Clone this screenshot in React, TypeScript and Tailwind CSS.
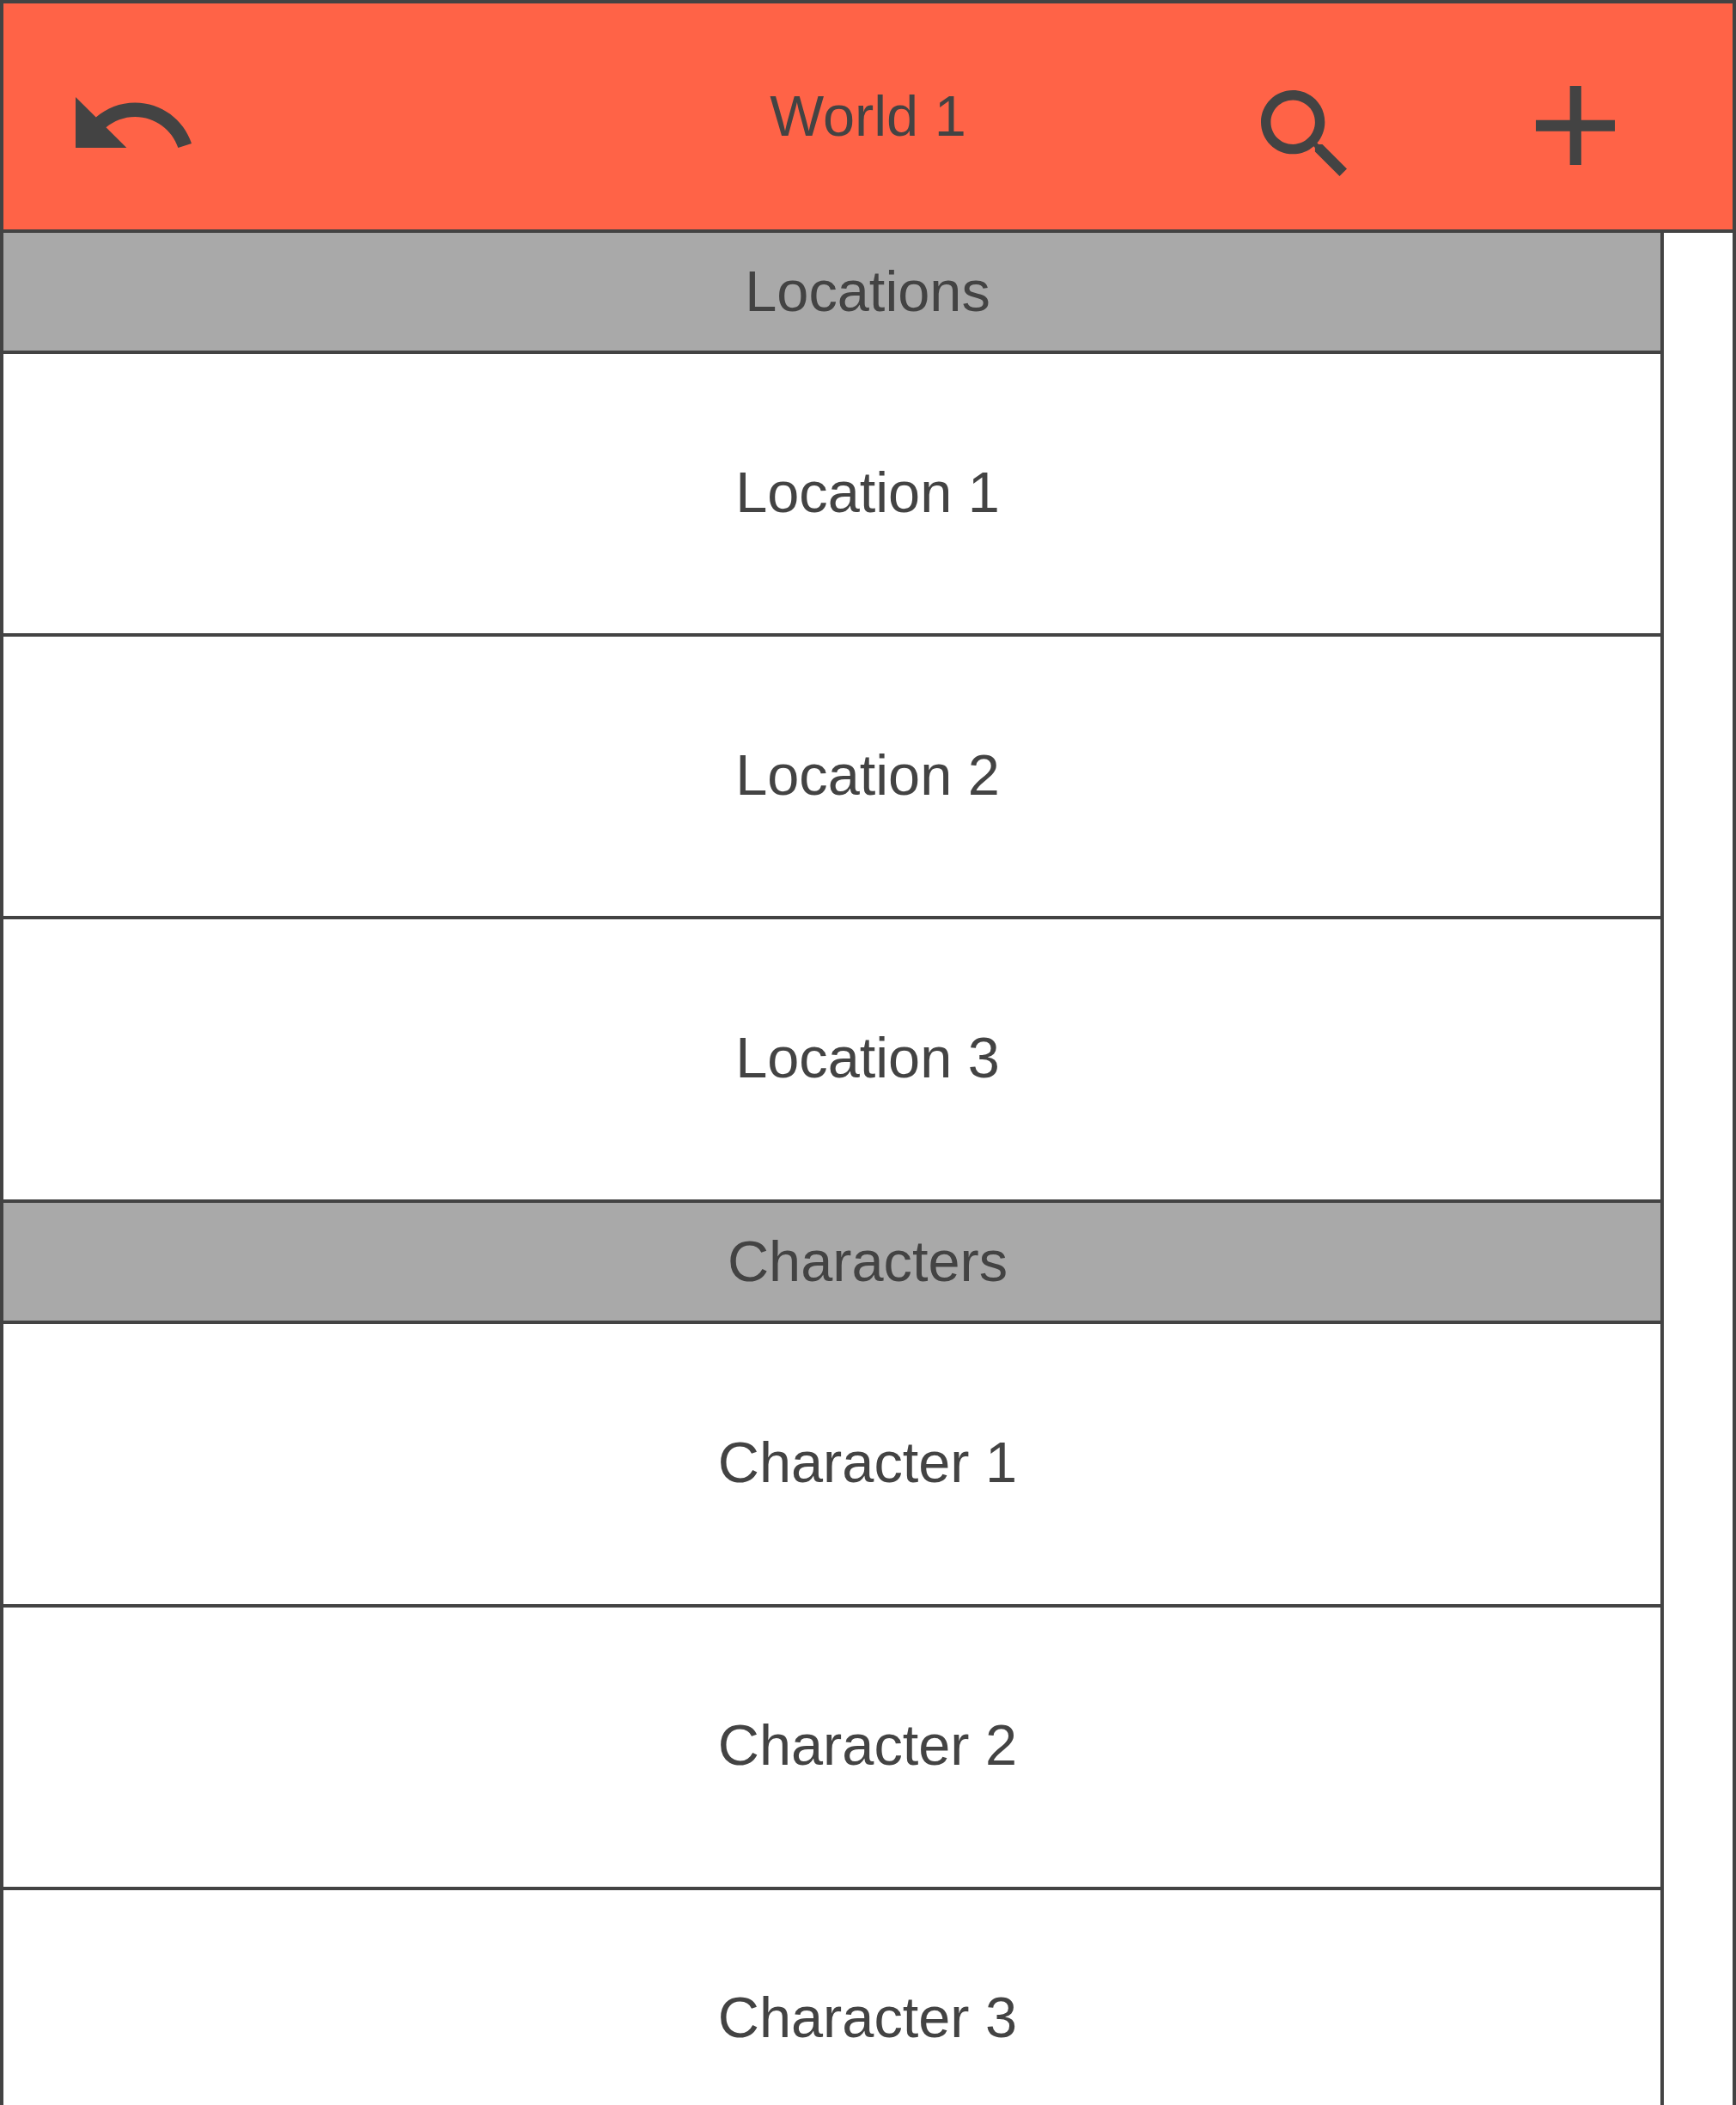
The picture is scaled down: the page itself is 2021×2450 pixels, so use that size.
const sections = [
  {
    title: 'Locations',
    headerClass: 'h-[141px] pb-[2px]',
    rows: [
      { label: 'Location 1', className: 'h-[329px] items-center border-b-4 pb-[4px]' },
      { label: 'Location 2', className: 'h-[329px] items-center border-b-4 pb-[4px]' },
      { label: 'Location 3', className: 'h-[330px] items-center border-b-4 pb-[4px]' },
    ],
  },
  {
    title: 'Characters',
    headerClass: 'h-[141px] pb-[1px]',
    rows: [
      { label: 'Character 1', className: 'h-[330px] items-center border-b-4 pb-[5px]' },
      { label: 'Character 2', className: 'h-[329px] items-center border-b-4 pb-[6px]' },
      { label: 'Character 3', className: 'h-[250px] items-start pt-[108px]' },
    ],
  },
];

function UndoIcon() {
  return (
    <svg className="mt-[109px] ml-[84px] h-[59px] w-[135px]" viewBox="2 7 20.47 9" preserveAspectRatio="none" fill="currentColor">
      <path d="M12.5 8c-2.65 0-5.05.99-6.9 2.6L2 7v9h9l-3.62-3.62c1.39-1.16 3.16-1.88 5.12-1.88 3.54 0 6.55 2.31 7.6 5.5l2.37-.78C21.08 11.03 17.15 8 12.5 8z" />
    </svg>
  );
}

function SearchIcon() {
  return (
    <svg className="mt-[100.5px] size-[100px]" viewBox="3 3 17.49 17.49" fill="currentColor">
      <path d="M15.5 14h-.79l-.28-.27C15.41 12.59 16 11.11 16 9.5 16 5.91 13.09 3 9.5 3S3 5.91 3 9.5 5.91 16 9.5 16c1.61 0 3.09-.59 4.23-1.57l.27.28v.79l5 4.99L20.49 19l-4.99-5zm-6 0C7.01 14 5 11.99 5 9.5S7.01 5 9.5 5 14 7.01 14 9.5 11.99 14 9.5 14z" />
    </svg>
  );
}

function PlusIcon() {
  return (
    <svg className="mt-[95.5px] size-[92.5px]" viewBox="5 5 14 14" fill="currentColor">
      <path d="M19 13h-6v6h-2v-6H5v-2h6V5h2v6h6v2z" />
    </svg>
  );
}

export default function App() {
  return (
    <div className="flex h-[2450px] w-[2021px] flex-col overflow-hidden border-x-4 border-t-4 border-[#434343] bg-white font-['Liberation_Sans',Arial,sans-serif] text-[66.7px] leading-[80px] text-[#434343]">
      <header className="grid h-[267px] shrink-0 grid-cols-[1fr_auto_1fr] items-start border-b-4 border-[#434343] bg-[#ff6347]">
        <button type="button" aria-label="Back" className="flex">
          <UndoIcon />
        </button>
        <h1 className="mt-[91px]">World 1</h1>
        <div className="flex items-start justify-end gap-[220px] pr-[137px]">
          <button type="button" aria-label="Search">
            <SearchIcon />
          </button>
          <button type="button" aria-label="Add">
            <PlusIcon />
          </button>
        </div>
      </header>
      <main className="w-[1933px] grow border-r-4 border-[#434343]">
        {sections.map((section) => (
          <section key={section.title}>
            <h2 className={`flex items-center justify-center border-b-4 border-[#434343] bg-[#a9a9a9] pl-[83px] ${section.headerClass}`}>
              {section.title}
            </h2>
            {section.rows.map((row) => (
              <div key={row.label} className={`flex justify-center border-[#434343] pl-[83px] ${row.className}`}>
                {row.label}
              </div>
            ))}
          </section>
        ))}
      </main>
    </div>
  );
}
